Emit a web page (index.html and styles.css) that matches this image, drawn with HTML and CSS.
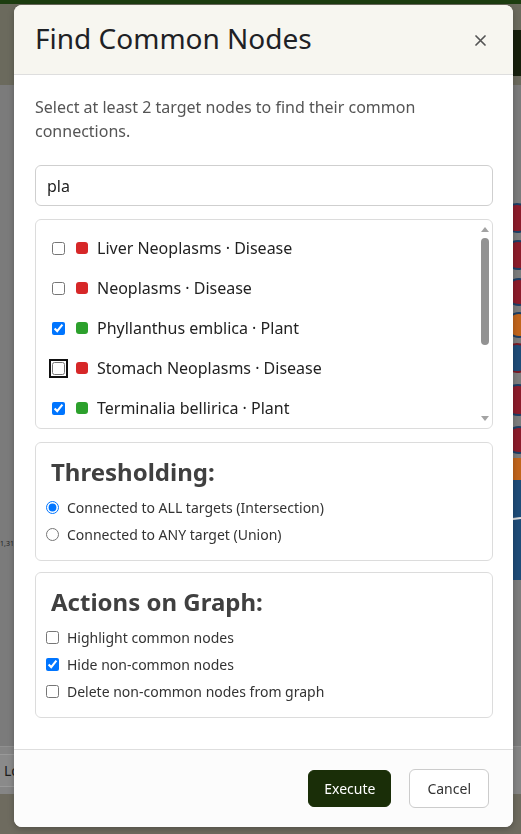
FILE: index.html
```html
<!DOCTYPE html>
<html lang="en">
<head>
<meta charset="utf-8">
<title>Find Common Nodes</title>
<link rel="stylesheet" href="styles.css">
</head>
<body>
<div class="page">
  <header class="navbar">
    <span class="nav-btn"></span>
  </header>
  <main class="content">
    <span class="axis-label">1,31,2</span>
    <svg class="graph" width="24" height="400" viewBox="0 0 24 400" aria-hidden="true">
      <rect x="0" y="0" width="24" height="400" fill="#7d7d7d"/>
      <circle cx="20" cy="18" r="14" fill="#8c1c2b" stroke="#1d3f66" stroke-width="2"/>
      <circle cx="21" cy="55" r="14" fill="#8c1c2b" stroke="#1d3f66" stroke-width="2"/>
      <circle cx="22" cy="92" r="13" fill="#8c1c2b" stroke="#1d3f66" stroke-width="2"/>
      <circle cx="22" cy="125" r="12" fill="#c1651c" stroke="#1d3f66" stroke-width="2"/>
      <circle cx="20" cy="158" r="14" fill="#1e4c78" stroke="#7a1a26" stroke-width="2"/>
      <circle cx="21" cy="200" r="15" fill="#8c1c2b" stroke="#1d3f66" stroke-width="2"/>
      <circle cx="22" cy="240" r="13" fill="#8c1c2b" stroke="#1d3f66" stroke-width="2"/>
      <rect x="0" y="258" width="24" height="36" fill="#c1651c"/>
      <rect x="0" y="280" width="24" height="60" fill="#1e4c78"/>
      <rect x="0" y="340" width="24" height="40" fill="#1e4c78"/>
      <path d="M8 320 L24 318" stroke="#dddddd" stroke-width="2"/>
    </svg>
  </main>
  <div class="toolbar">
    <span class="tool-btn">Load</span>
  </div>
  <footer class="statusbar"></footer>
</div>

<div class="overlay">
  <div class="modal" role="dialog" aria-labelledby="modal-title">
    <div class="modal-header">
      <h2 id="modal-title" class="modal-title">Find Common Nodes</h2>
      <button class="close-btn" type="button" aria-label="Close">
        <svg width="11" height="11" viewBox="0 0 11 11"><path d="M1 1 L10 10 M10 1 L1 10" stroke="#555" stroke-width="1.7" stroke-linecap="round"/></svg>
      </button>
    </div>
    <div class="modal-body">
      <p class="intro">Select at least 2 target nodes to find their common connections.</p>
      <input class="search" type="text" value="pla">
      <div class="node-list">
        <div class="node-items">
          <label class="node-item"><input type="checkbox"><span class="dot dot-disease"></span>Liver Neoplasms · Disease</label>
          <label class="node-item"><input type="checkbox"><span class="dot dot-disease"></span>Neoplasms · Disease</label>
          <label class="node-item"><input type="checkbox" checked><span class="dot dot-plant"></span>Phyllanthus emblica · Plant</label>
          <label class="node-item"><input type="checkbox" class="focused"><span class="dot dot-disease"></span>Stomach Neoplasms · Disease</label>
          <label class="node-item"><input type="checkbox" checked><span class="dot dot-plant"></span>Terminalia bellirica · Plant</label>
        </div>
        <div class="scrollbar" aria-hidden="true">
          <span class="sb-up"></span>
          <span class="sb-thumb"></span>
          <span class="sb-down"></span>
        </div>
      </div>
      <section class="panel">
        <h3 class="panel-title">Thresholding:</h3>
        <label class="option"><input type="radio" name="mode" checked><span>Connected to ALL targets (Intersection)</span></label>
        <label class="option"><input type="radio" name="mode"><span>Connected to ANY target (Union)</span></label>
      </section>
      <section class="panel panel-actions">
        <h3 class="panel-title">Actions on Graph:</h3>
        <label class="option"><input type="checkbox"><span>Highlight common nodes</span></label>
        <label class="option"><input type="checkbox" checked><span>Hide non-common nodes</span></label>
        <label class="option"><input type="checkbox"><span>Delete non-common nodes from graph</span></label>
      </section>
    </div>
    <div class="modal-footer">
      <button class="btn btn-primary" type="button">Execute</button>
      <button class="btn btn-secondary" type="button">Cancel</button>
    </div>
  </div>
</div>
</body>
</html>
```

FILE: styles.css
```css
* { box-sizing: border-box; }

html, body {
  margin: 0;
  height: 100%;
}

body {
  font-family: "Noto Sans", "Open Sans", sans-serif;
  color: #222;
  overflow: hidden;
  background: #7b7b7b;
}

/* ---------- dimmed page behind the dialog ---------- */
.page {
  height: 834px;
  display: flex;
  flex-direction: column;
}

.navbar {
  height: 85px;
  flex: none;
  background: #6b6a5d;
  border-top: 4px solid #1d3d10;
  display: flex;
  align-items: flex-start;
  justify-content: flex-end;
  padding-top: 26px;
}

.nav-btn {
  width: 30px;
  height: 46px;
  background: #161f0c;
  border-radius: 10px 0 0 10px;
}

.content {
  flex: 1;
  background: #7b7b7b;
  display: flex;
  justify-content: space-between;
  align-items: flex-start;
}

.axis-label {
  font-size: 7px;
  color: #222;
  margin-top: 454px;
}

.graph {
  margin-top: 115px;
  display: block;
}

.toolbar {
  height: 48px;
  flex: none;
  background: #858585;
  border-top: 1px solid #909090;
  display: flex;
  align-items: center;
}

.tool-btn {
  font-size: 14px;
  color: #1c1c1c;
  padding: 6px 4px;
  border: 1px solid #999;
  border-left: none;
  background: #8a8a8a;
}

.statusbar {
  height: 40px;
  flex: none;
  background: #6e6b5f;
}

/* ---------- dialog ---------- */
.overlay {
  position: fixed;
  inset: 0;
  padding: 5px 8px 7px 14px;
}

.modal {
  width: 499px;
  background: #fff;
  border-radius: 8px;
  overflow: hidden;
  display: flex;
  flex-direction: column;
  box-shadow: 0 2px 6px rgba(0, 0, 0, 0.25);
}

.modal-header {
  height: 70px;
  background: #f7f6f0;
  border-bottom: 1px solid #dedede;
  display: flex;
  align-items: center;
  justify-content: space-between;
  padding: 0 27px 0 21px;
}

.modal-title {
  margin: 0 0 2px;
  font-size: 28px;
  font-weight: 400;
  line-height: 1.2;
  color: #1e2125;
}

.close-btn {
  border: none;
  background: none;
  padding: 0;
  width: 11px;
  height: 11px;
  margin-top: 2px;
  display: flex;
  cursor: pointer;
}

.modal-body {
  padding: 20px 20px 31px 21px;
}

.intro {
  margin: 0 0 22px;
  font-size: 16px;
  line-height: 24px;
  color: #555;
}

.search {
  display: block;
  width: 100%;
  height: 41px;
  border: 1px solid #cfcfcf;
  border-radius: 6px;
  padding: 0 11px;
  font-family: inherit;
  font-size: 16px;
  color: #222;
  background: #fff;
  outline: none;
}

.node-list {
  position: relative;
  margin-top: 13px;
  height: 210px;
  border: 1px solid #dcdcdc;
  border-radius: 6px;
  overflow: hidden;
}

.node-items {
  padding: 8px 15px 0 0;
}

.node-item {
  height: 40px;
  display: flex;
  align-items: center;
  padding-left: 12px;
  font-size: 16px;
  color: #222;
}

.node-item input {
  margin: 0 3px 0 4px;
  width: 13px;
  height: 13px;
  flex: none;
}

.node-item input.focused {
  outline: 2px solid #111;
  outline-offset: 1px;
  border-radius: 2px;
}

.dot {
  width: 12px;
  height: 12px;
  border-radius: 3px;
  margin: 0 9px 0 8px;
  flex: none;
}

.dot-disease { background: #d62728; }
.dot-plant { background: #2ca02c; }

/* drawn scrollbar of the list */
.scrollbar {
  position: absolute;
  top: 0;
  right: 0;
  bottom: 0;
  width: 15px;
  display: flex;
  flex-direction: column;
  align-items: center;
  padding: 7px 0 7px;
}

.sb-up {
  width: 0;
  height: 0;
  border-left: 4px solid transparent;
  border-right: 4px solid transparent;
  border-bottom: 5px solid #a3a3a3;
}

.sb-thumb {
  margin-top: 6px;
  width: 8px;
  height: 107px;
  border-radius: 4px;
  background: #929292;
}

.sb-down {
  margin-top: auto;
  width: 0;
  height: 0;
  border-left: 4px solid transparent;
  border-right: 4px solid transparent;
  border-top: 5px solid #a3a3a3;
}

.panel {
  margin-top: 13px;
  border: 1px solid #dcdcdc;
  border-radius: 6px;
  padding: 13px 10px 12px;
}

.panel-actions {
  margin-top: 11px;
}

.panel-title {
  margin: 0 0 6px 5px;
  font-size: 24px;
  font-weight: 700;
  line-height: 32px;
  color: #404040;
}

.option {
  height: 27px;
  display: flex;
  align-items: center;
  font-size: 14px;
  line-height: 20px;
  color: #333;
}

.option input {
  margin: 0 8px 0 0;
  width: 13px;
  height: 13px;
  flex: none;
}

.modal-footer {
  height: 78px;
  border-top: 1px solid #dedede;
  background: #fcfcfc;
  display: flex;
  align-items: center;
  justify-content: flex-end;
  gap: 18px;
  padding: 0 24px 0 0;
}

.btn {
  font-family: inherit;
  font-size: 14px;
  border-radius: 6px;
  cursor: pointer;
}

.btn-primary {
  height: 37px;
  padding: 0 15px;
  background: #1a2e08;
  border: 1px solid #1a2e08;
  color: #fff;
}

.btn-secondary {
  height: 39px;
  padding: 0 17px;
  background: #fff;
  border: 1px solid #cccccc;
  color: #333;
}
```
